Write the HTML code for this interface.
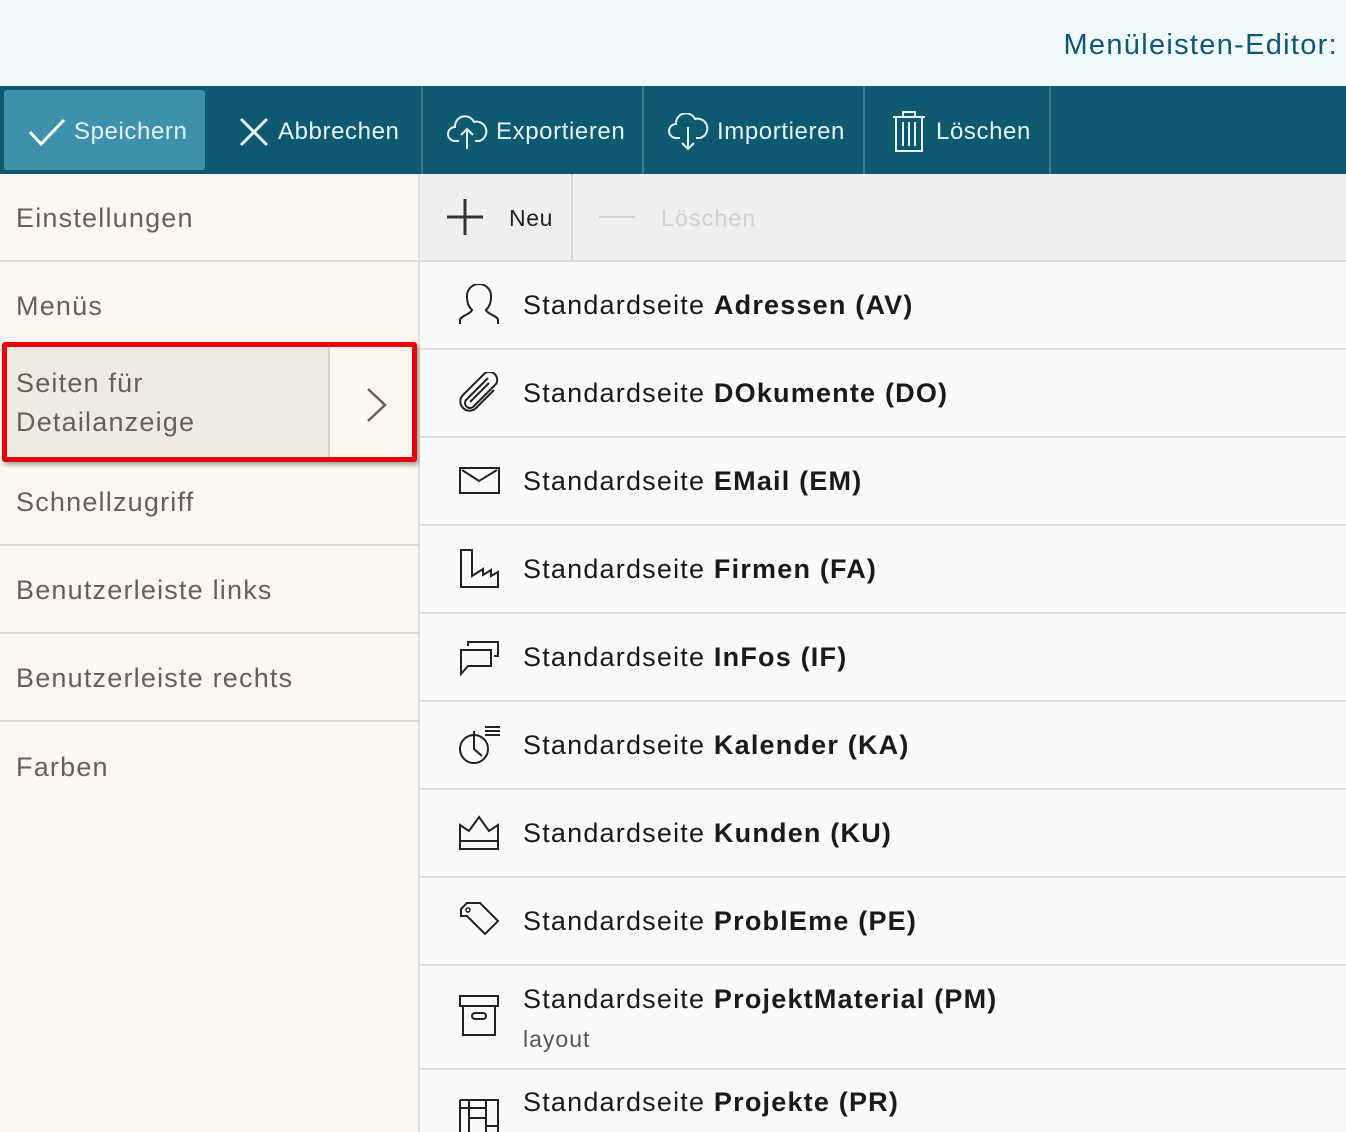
<!DOCTYPE html>
<html><head><meta charset="utf-8"><style>
*{margin:0;padding:0;box-sizing:border-box}
html{overflow:hidden;height:1132px}
body{width:1346px;height:1132px;overflow:hidden;position:relative;background:#fafafa;font-family:"Liberation Sans",sans-serif}
.abs{position:absolute}
.hdr{left:0;top:0;width:1346px;height:86px;background:#f1f9fc}
.title{right:8px;top:29px;font-size:29px;color:#0d5a70;letter-spacing:1.3px}
.tb{left:0;top:86px;width:1346px;height:88px;background:#0d5a70}
.tbtn{top:88px;height:88px;color:#e8f2f5;font-size:24px;display:flex;align-items:center;letter-spacing:0.6px}
.tbtn svg{margin-right:8px}
.sep{top:86px;width:2px;height:88px;background:#3f7b8e}
.side{left:0;top:174px;width:420px;height:958px;background:#fdf7f1;border-right:2px solid #e4e0dc}
.si{left:0;width:420px;height:88px;border-bottom:2px solid #dedad6;font-size:27px;color:#6a5f55;padding-left:16px;padding-top:2px;display:flex;align-items:center;letter-spacing:1.2px}
.sub{left:420px;top:174px;width:926px;height:88px;background:#efefef;border-bottom:2px solid #d8d8d8}
.row{left:420px;width:926px;border-bottom:2px solid #dedede;background:#fafafa}
.rt{left:523px;font-size:27px;color:#1a1a1a;white-space:nowrap;letter-spacing:1.2px;margin-top:2px}
.rt b{font-weight:bold}
.ic{left:458px}
</style></head><body>
<div class="abs hdr"></div>
<div class="abs title">Menüleisten-Editor:</div>
<div class="abs tb"></div>
<div class="abs" style="left:4px;top:90px;width:201px;height:80px;background:#3d91ad;border-radius:3px"></div>
<div class="abs tbtn" style="left:28px"><svg width="38" height="30" viewBox="0 0 38 30"><path d="M2 15 L13 27 L36 3" fill="none" stroke="#fff" stroke-width="3"/></svg>Speichern</div>
<div class="abs tbtn" style="left:238px"><svg width="32" height="32" viewBox="0 0 32 32"><path d="M3 3L29 29M29 3L3 29" stroke="#e8f2f5" stroke-width="3"/></svg>Abbrechen</div>
<div class="abs sep" style="left:421px"></div>
<div class="abs tbtn" style="left:446px"><svg width="42" height="36" viewBox="0 0 42 36"><path d="M13 27H9a7 7 0 0 1 0-14a10 10 0 0 1 19-5a8 8 0 0 1 5 19h-4M21 35V15M15 21l6-6 6 6" fill="none" stroke="#e8f2f5" stroke-width="2"/></svg>Exportieren</div>
<div class="abs sep" style="left:642px"></div>
<div class="abs tbtn" style="left:667px"><svg width="42" height="38" viewBox="0 0 42 38"><path d="M13 25H9a7 7 0 0 1 0-14a10 10 0 0 1 19-5a8 8 0 0 1 5 19h-4M21 14V36M15 30l6 6 6-6" fill="none" stroke="#e8f2f5" stroke-width="2"/></svg>Importieren</div>
<div class="abs sep" style="left:863px"></div>
<div class="abs tbtn" style="left:892px"><svg width="36" height="42" viewBox="0 0 36 42"><path d="M1 6H33M11 6V1H23V6M4 6V40H30V6M11 11V35M17 11V35M23 11V35" fill="none" stroke="#e8f2f5" stroke-width="2"/></svg>Löschen</div>
<div class="abs sep" style="left:1049px"></div>

<div class="abs side"></div>
<div class="abs si" style="top:174px">Einstellungen</div>
<div class="abs si" style="top:262px">Menüs</div>
<div class="abs si" style="top:458px">Schnellzugriff</div>
<div class="abs si" style="top:546px">Benutzerleiste links</div>
<div class="abs si" style="top:634px">Benutzerleiste rechts</div>
<div class="abs si" style="top:722px;border-bottom:none">Farben</div>
<div class="abs" style="left:2px;top:342px;width:415px;height:120px;border:5px solid #e8000b;border-radius:3px;box-shadow:2px 3px 5px rgba(0,0,0,.35);background:#fdf7f1">
 <div class="abs" style="left:0;top:0;width:323px;height:110px;background:#efeae4;border-right:2px solid #d8d2cc;font-size:27px;color:#6a5f55;padding:17px 0 0 9px;line-height:39px;letter-spacing:1.2px">Seiten für<br>Detailanzeige</div>
 <svg class="abs" style="left:358px;top:40px" width="24" height="36" viewBox="0 0 24 36"><path d="M3 2L20 18L3 34" fill="none" stroke="#6a5f55" stroke-width="2.5"/></svg>
</div>

<div class="abs sub"></div>
<div class="abs" style="left:571px;top:174px;width:2px;height:87px;background:#d4d4d4"></div>
<svg class="abs" style="left:446px;top:198px" width="38" height="38" viewBox="0 0 38 38"><path d="M19 1V37M1 19H37" stroke="#333" stroke-width="3"/></svg>
<div class="abs" style="left:509px;top:205px;font-size:23px;color:#222;letter-spacing:0.6px">Neu</div>
<div class="abs" style="left:599px;top:216px;width:36px;height:2px;background:#d2d2d2"></div>
<div class="abs" style="left:661px;top:205px;font-size:23px;color:#d0d0d0;letter-spacing:1.2px">Löschen</div>

<div class="abs row" style="top:262px;height:88px"></div>
<div class="abs row" style="top:350px;height:88px"></div>
<div class="abs row" style="top:438px;height:88px"></div>
<div class="abs row" style="top:526px;height:88px"></div>
<div class="abs row" style="top:614px;height:88px"></div>
<div class="abs row" style="top:702px;height:88px"></div>
<div class="abs row" style="top:790px;height:88px"></div>
<div class="abs row" style="top:878px;height:88px"></div>
<div class="abs row" style="top:966px;height:104px"></div>
<div class="abs row" style="top:1070px;height:62px;border:none"></div>

<svg class="abs ic" style="top:284px" width="44" height="42" viewBox="0 0 44 42"><path d="M2 40V36c0-4 11-6 12-10c-4-4-5-8-5-14a12 12 0 0 1 24 0c0 6-1 10-5 14c1 4 12 6 12 10v4" fill="none" stroke="#222" stroke-width="2"/></svg>
<div class="abs rt" style="top:288px">Standardseite <b>Adressen (AV)</b></div>
<svg class="abs ic" style="top:372px" width="44" height="42" viewBox="0 0 44 42"><path d="M30 6L8 28a5 5 0 0 0 7 7L38 12a8 8 0 0 0-11-11L5 23a9 9 0 0 0 13 13L36 18M31 11L12 30" fill="none" stroke="#222" stroke-width="2"/></svg>
<div class="abs rt" style="top:376px">Standardseite <b>DOkumente (DO)</b></div>
<svg class="abs ic" style="top:466px" width="44" height="30" viewBox="0 0 44 30"><rect x="2" y="2" width="39" height="25" fill="none" stroke="#222" stroke-width="2"/><path d="M4 4L21 15L39 4" fill="none" stroke="#222" stroke-width="2"/></svg>
<div class="abs rt" style="top:464px">Standardseite <b>EMail (EM)</b></div>
<svg class="abs ic" style="top:548px" width="44" height="42" viewBox="0 0 44 42"><path d="M3 2V39H40V24L33 28V22L25 27V21L14 28V2Z" fill="none" stroke="#222" stroke-width="2"/></svg>
<div class="abs rt" style="top:552px">Standardseite <b>Firmen (FA)</b></div>
<svg class="abs ic" style="top:638px" width="44" height="40" viewBox="0 0 44 40"><path d="M10 8V4H40V18H36M3 12H33V28H10L3 36Z" fill="none" stroke="#222" stroke-width="2"/></svg>
<div class="abs rt" style="top:640px">Standardseite <b>InFos (IF)</b></div>
<svg class="abs ic" style="top:722px" width="44" height="44" viewBox="0 0 44 44"><circle cx="16" cy="27" r="14" fill="none" stroke="#222" stroke-width="2"/><path d="M16 9V27L24 34M27 5H42M27 9H42M27 13H42" fill="none" stroke="#222" stroke-width="2"/></svg>
<div class="abs rt" style="top:728px">Standardseite <b>Kalender (KA)</b></div>
<svg class="abs ic" style="top:814px" width="44" height="38" viewBox="0 0 44 38"><path d="M2 11L11 17L21 3L31 17L40 11V35H2ZM2 27H40" fill="none" stroke="#222" stroke-width="2"/></svg>
<div class="abs rt" style="top:816px">Standardseite <b>Kunden (KU)</b></div>
<svg class="abs ic" style="top:900px" width="44" height="42" viewBox="0 0 44 42"><path d="M3 9L9 3H22L40 21L27 34L9 16H3Z" fill="none" stroke="#222" stroke-width="2"/><circle cx="10" cy="10" r="2" fill="none" stroke="#222" stroke-width="1.5"/></svg>
<div class="abs rt" style="top:904px">Standardseite <b>ProblEme (PE)</b></div>
<svg class="abs ic" style="top:994px" width="44" height="44" viewBox="0 0 44 44"><path d="M2 2H40V12H2ZM5 12V41H37V12" fill="none" stroke="#222" stroke-width="2"/><rect x="14" y="19" width="14" height="6" rx="3" fill="none" stroke="#222" stroke-width="2"/></svg>
<div class="abs rt" style="top:982px">Standardseite <b>ProjektMaterial (PM)</b></div>
<div class="abs" style="left:523px;top:1026px;font-size:23px;color:#555;letter-spacing:1px">layout</div>
<svg class="abs ic" style="top:1098px" width="44" height="34" viewBox="0 0 44 34"><path d="M2 2H40V34M2 2V34M11 2V34M2 10H28M11 20H28M28 2V34M28 28H40" fill="none" stroke="#222" stroke-width="2"/></svg>
<div class="abs rt" style="top:1085px">Standardseite <b>Projekte (PR)</b></div>
</body></html>
